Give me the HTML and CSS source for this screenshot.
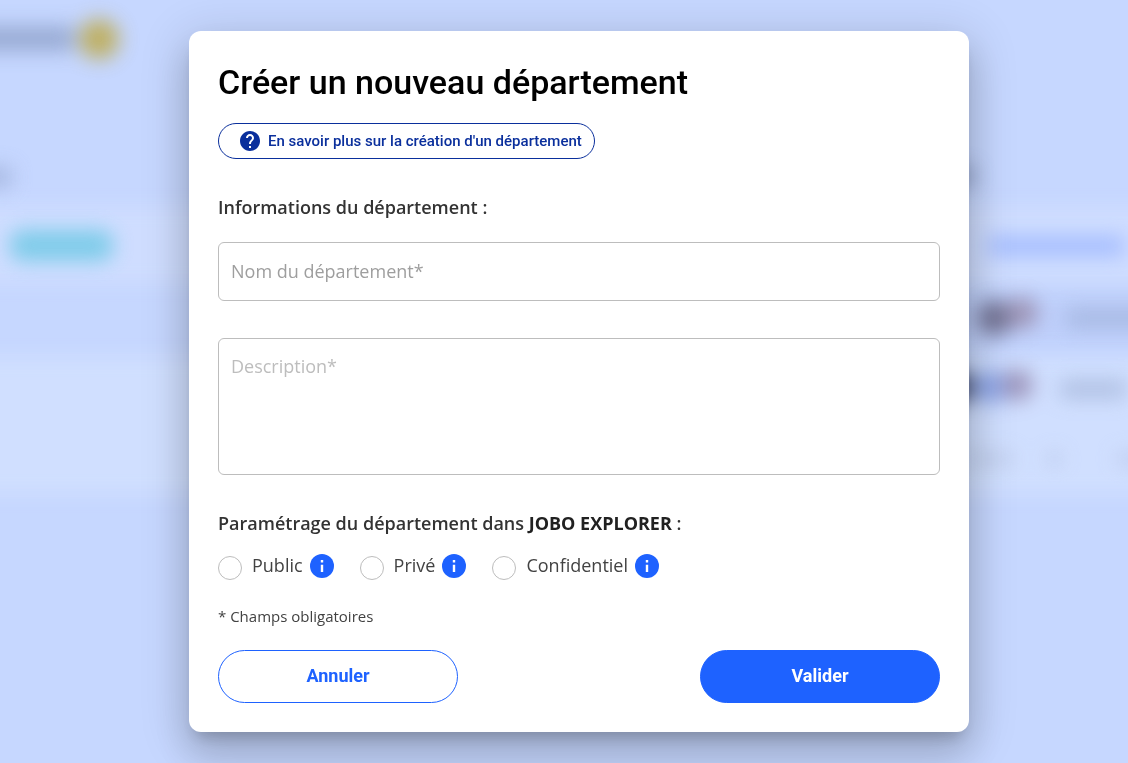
FILE: index.html
```html
<!DOCTYPE html>
<html lang="fr">
<head>
<meta charset="utf-8">
<meta name="viewport" content="width=device-width, initial-scale=1">
<title>Créer un nouveau département</title>
<link rel="stylesheet" href="styles.css">
</head>
<body>
<svg class="backdrop" viewBox="0 0 1128 763" preserveAspectRatio="none" aria-hidden="true">
  <defs>
    <filter id="soft" x="-100" y="-100" width="1400" height="1000" filterUnits="userSpaceOnUse" color-interpolation-filters="sRGB"><feGaussianBlur stdDeviation="10"/></filter>
  </defs>
  <g filter="url(#soft)">
    <rect x="-60" y="207" width="1300" height="76" fill="#cfddff"/>
    <rect x="-60" y="357" width="1300" height="137" fill="#d0dfff"/>
    <rect x="900" y="292" width="300" height="55" fill="#becffb"/>
  </g>
  <g filter="url(#soft)" opacity=".8">
    <rect x="-40" y="26" width="114" height="25" fill="#8c9fc8"/>
    <circle cx="99" cy="39" r="20" fill="#bda63c"/>
    <rect x="-40" y="167" width="52" height="20" fill="#a0b1da"/>
    <rect x="10" y="230" width="103" height="31" rx="12" fill="#6ac8e4"/>
    <rect x="950" y="167" width="25" height="18" fill="#8795bd"/>
    <rect x="988" y="236" width="136" height="20" fill="#9ab5ff"/>
    <circle cx="995" cy="318" r="18" fill="#5f5b78"/>
    <circle cx="1022" cy="313" r="16" fill="#9586a5"/>
    <rect x="1066" y="308" width="92" height="20" fill="#a2b4dd"/>
    <circle cx="957" cy="387" r="17" fill="#2a3052"/>
    <circle cx="991" cy="387" r="17" fill="#7d98e4"/>
    <circle cx="1017" cy="385" r="16" fill="#9185ac"/>
    <rect x="1060" y="379" width="66" height="20" fill="#a9badd"/>
    <rect x="965" y="452" width="49" height="14" fill="#bccae8"/>
    <rect x="1048" y="452" width="13" height="14" fill="#b5c4e4"/>
    <rect x="1116" y="452" width="40" height="14" fill="#bccaec"/>
  </g>
</svg>
<main class="overlay">
  <form class="dialog" role="dialog" aria-labelledby="title">
    <h1 class="title" id="title">Créer un nouveau département</h1>
    <a class="help" href="#">
      <svg class="help-icon" viewBox="2 2 20 20" aria-hidden="true"><path fill="currentColor" d="M12 2C6.480 2 2 6.480 2 12s4.480 10 10 10 10-4.480 10-10S17.520 2 12 2zm1 17h-2v-2h2v2zm2.070-7.750l-.9.920C13.450 12.900 13 13.500 13 15h-2v-.5c0-1.100.45-2.100 1.170-2.830l1.240-1.260c.37-.36.59-.86.59-1.410 0-1.100-.9-2-2-2s-2 .9-2 2H8c0-2.210 1.790-4 4-4s4 1.790 4 4c0 .88-.36 1.680-.93 2.250z"/></svg>
      <span>En savoir plus sur la création d'un département</span>
    </a>
    <h2 class="section" id="infos">Informations du département :</h2>
    <input class="field" type="text" placeholder="Nom du département*" aria-label="Nom du département" required>
    <textarea class="field area" placeholder="Description*" aria-label="Description" required></textarea>
    <h2 class="section" id="visibility">Paramétrage du département dans <strong class="product">JOBO EXPLORER</strong> :</h2>
    <div class="options" role="radiogroup" aria-labelledby="visibility">
      <div class="option">
        <input class="radio" type="radio" name="visibility" id="public">
        <label class="option-label" for="public">Public</label>
        <button class="info" type="button" aria-label="Informations : Public"><svg class="info-icon" viewBox="2 2 20 20" aria-hidden="true"><circle cx="12" cy="12" r="10" fill="currentColor"/><path fill="#fff" d="M11 11h2v6h-2zM11 7h2v2h-2z"/></svg></button>
      </div>
      <div class="option">
        <input class="radio" type="radio" name="visibility" id="prive">
        <label class="option-label" for="prive">Privé</label>
        <button class="info" type="button" aria-label="Informations : Privé"><svg class="info-icon" viewBox="2 2 20 20" aria-hidden="true"><circle cx="12" cy="12" r="10" fill="currentColor"/><path fill="#fff" d="M11 11h2v6h-2zM11 7h2v2h-2z"/></svg></button>
      </div>
      <div class="option">
        <input class="radio" type="radio" name="visibility" id="confidentiel">
        <label class="option-label" for="confidentiel">Confidentiel</label>
        <button class="info" type="button" aria-label="Informations : Confidentiel"><svg class="info-icon" viewBox="2 2 20 20" aria-hidden="true"><circle cx="12" cy="12" r="10" fill="currentColor"/><path fill="#fff" d="M11 11h2v6h-2zM11 7h2v2h-2z"/></svg></button>
      </div>
    </div>
    <p class="note">* Champs obligatoires</p>
    <div class="actions">
      <button class="btn" type="button">Annuler</button>
      <button class="btn btn-primary" type="submit">Valider</button>
    </div>
  </form>
</main>
</body>
</html>
```

FILE: styles.css
```css
* {
  box-sizing: border-box;
}

body {
  margin: 0;
  background: #c6d7ff;
  color: #212121;
  font-family: "Open Sans", "Noto Sans", sans-serif;
  overflow-x: hidden;
}

.backdrop {
  position: fixed;
  inset: 0;
  width: 100%;
  height: 100%;
}

.overlay {
  position: relative;
  display: flex;
  align-items: center;
  justify-content: center;
  min-height: 100vh;
  padding: 16px 0 16px 30px;
}

.dialog {
  display: flex;
  flex-direction: column;
  width: 100%;
  max-width: 780px;
  padding: 29px;
  border-radius: 12px;
  background: #fff;
  box-shadow: 0 11px 15px -7px rgba(0, 0, 0, .2), 0 24px 38px 3px rgba(0, 0, 0, .14), 0 9px 46px 8px rgba(0, 0, 0, .12);
}

.title {
  margin: 0 0 19px;
  color: #000;
  font: 500 34px/44px Roboto, sans-serif;
}

.help {
  display: flex;
  align-items: center;
  align-self: flex-start;
  gap: 8px;
  height: 36px;
  padding: 0 12px 0 21px;
  border: 1px solid #0a2f9c;
  border-radius: 18px;
  color: #0a2f9c;
  font: 500 15px/20px Roboto, sans-serif;
  text-decoration: none;
}

.help-icon {
  width: 20px;
  height: 20px;
}

.section {
  margin: 34px 0 0;
  color: #333;
  font-size: 18px;
  font-weight: 600;
  line-height: 28px;
}

.product {
  color: #212121;
  font-weight: 700;
}

.field {
  width: 100%;
  height: 59px;
  margin: 21px 0 0;
  padding: 0 12px 2px;
  border: 1px solid #bdbdbd;
  border-radius: 6px;
  background: #fff;
  color: #212121;
  font: 400 18px/26px "Open Sans", sans-serif;
}

.field::placeholder {
  color: #9e9e9e;
  opacity: 1;
}

.area {
  height: 137px;
  margin-top: 37px;
  padding: 14px 12px;
  resize: none;
}

.area::placeholder {
  color: #bdbdbd;
}

.options {
  display: flex;
  flex-wrap: wrap;
  gap: 26px;
  margin-top: 14px;
}

.option {
  display: flex;
  align-items: center;
  height: 30px;
}

.radio {
  appearance: none;
  width: 24px;
  height: 24px;
  margin: 4px 10px 0 0;
  border: 1px solid #bdbdbd;
  border-radius: 50%;
  background: #fff;
}

.radio:checked {
  border: 7px solid #1e62ff;
}

.option-label {
  color: #424242;
  font-size: 18px;
  font-weight: 400;
  line-height: 26px;
  padding-bottom: 2px;
}

.info {
  display: flex;
  margin: 0 0 0 7px;
  padding: 0;
  border: 0;
  background: none;
  color: #1e62ff;
}

.info-icon {
  width: 24px;
  height: 24px;
}

.note {
  margin: 23px 0 22px;
  color: #424242;
  font-size: 15px;
  font-weight: 400;
  line-height: 24px;
}

.actions {
  display: flex;
  justify-content: space-between;
  gap: 24px;
}

.btn {
  width: 240px;
  height: 53px;
  padding: 0 16px 2px;
  border: 1px solid #1e62ff;
  border-radius: 27px;
  background: #fff;
  color: #1e62ff;
  font: 700 18px/24px Roboto, sans-serif;
}

.btn-primary {
  background: #1e62ff;
  color: #fff;
}
```
